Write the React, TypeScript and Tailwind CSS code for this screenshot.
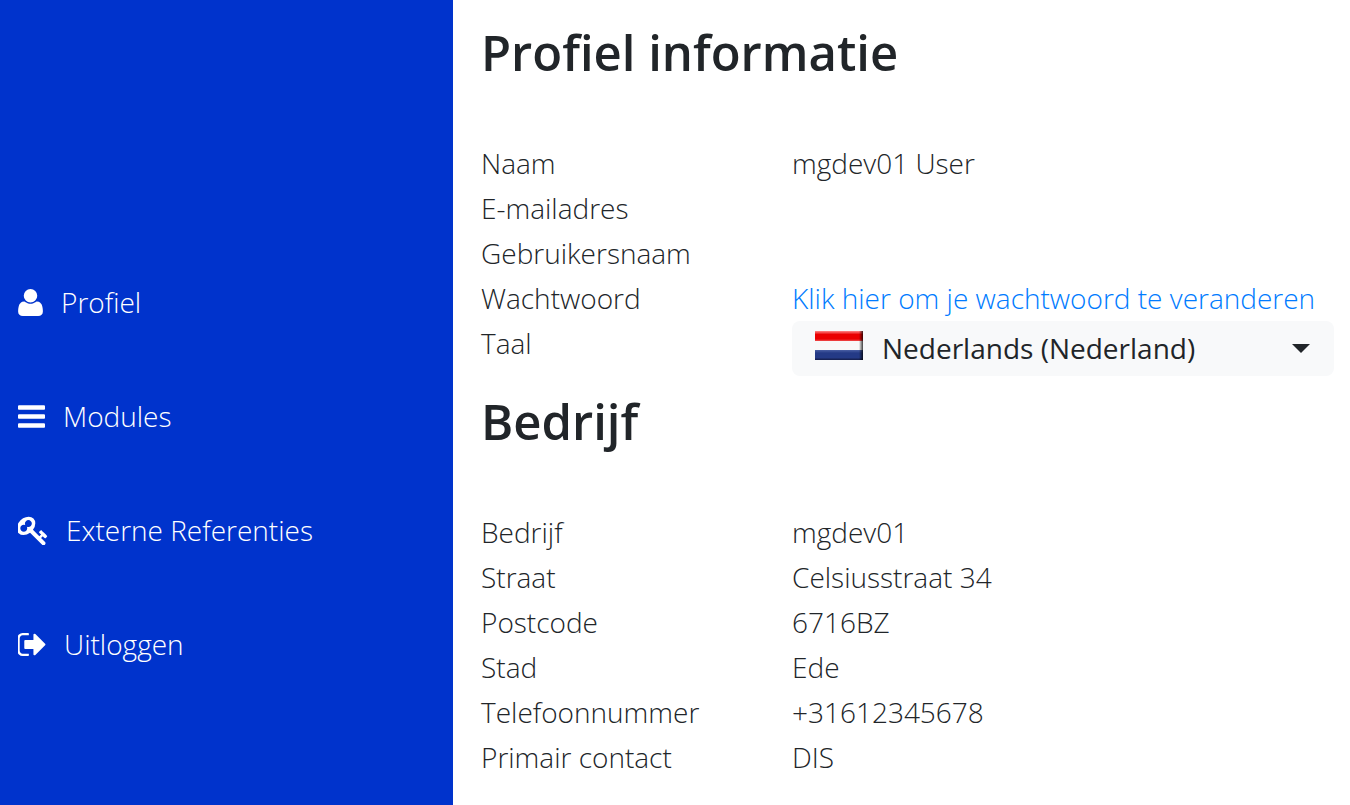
import { useState } from 'react'

const menu = [
  {
    label: 'Profiel',
    href: '#profiel',
    viewBox: '192 128 1408 1536',
    size: 'w-[25px] h-[27px]',
    path: 'M1600 1405q0 120-73 189.5t-194 69.5h-874q-121 0-194-69.5t-73-189.5q0-53 3.5-103.5t14-109 26.5-108.5 43-97.5 62-81 85.5-53.5 111.5-20q9 0 42 21.5t74.5 48 108 48 133.5 21.5 133.5-21.5 108-48 74.5-48 42-21.5q61 0 111.5 20t85.5 53.5 62 81 43 97.5 26.5 108.5 14 109 3.5 103.5zm-320-893q0 159-112.5 271.5t-271.5 112.5-271.5-112.5-112.5-271.5 112.5-271.5 271.5-112.5 271.5 112.5 112.5 271.5z',
  },
  {
    label: 'Modules',
    href: '#modules',
    viewBox: '128 256 1536 1280',
    size: 'w-[27px] h-[23px]',
    path: 'M1664 1344v128q0 26-19 45t-45 19h-1408q-26 0-45-19t-19-45v-128q0-26 19-45t45-19h1408q26 0 45 19t19 45zm0-512v128q0 26-19 45t-45 19h-1408q-26 0-45-19t-19-45v-128q0-26 19-45t45-19h1408q26 0 45 19t19 45zm0-512v128q0 26-19 45t-45 19h-1408q-26 0-45-19t-19-45v-128q0-26 19-45t45-19h1408q26 0 45 19t19 45z',
  },
  {
    label: 'Externe Referenties',
    href: '#referenties',
    viewBox: '64 96 1664 1600',
    size: 'w-[30px] h-[29px]',
    path: 'M832 512q0-80-56-136t-136-56-136 56-56 136q0 42 19 83-41-19-83-19-80 0-136 56t-56 136 56 136 136 56 136-56 56-136q0-42-19-83 41 19 83 19 80 0 136-56t56-136zm851 704q0 17-49 66t-66 49q-9 0-28.5-16t-36.5-33-38.5-40-24.5-26l-96 96 220 220q28 28 28 68 0 42-39 81t-81 39q-40 0-68-28l-671-671q-176 131-365 131-163 0-265.5-102.5t-102.5-265.5q0-160 95-313t248-248 313-95q163 0 265.5 102.5t102.5 265.5q0 189-131 365l355 355 96-96q-3-3-26-24.5t-40-38.5-33-36.5-16-28.5q0-17 49-66t66-49q13 0 23 10 6 6 46 44.5t82 79.5 86.5 86 73 78 28.5 41z',
  },
  {
    label: 'Uitloggen',
    href: '#uitloggen',
    viewBox: '96 256 1568 1280',
    size: 'w-[28px] h-[23px]',
    path: 'M704 1440q0 4 1 20t.5 26.5-3 23.5-10 19.5-20.5 6.5h-320q-119 0-203.5-84.5t-84.5-203.5v-704q0-119 84.5-203.5t203.5-84.5h320q13 0 22.5 9.5t9.5 22.5q0 4 1 20t.5 26.5-3 23.5-10 19.5-20.5 6.5h-320q-66 0-113 47t-47 113v704q0 66 47 113t113 47h312l11.5 1 11.5 3 8 5.5 7 9 2 13.5zm928-544q0 26-19 45l-544 544q-19 19-45 19t-45-19-19-45v-288h-448q-26 0-45-19t-19-45v-384q0-26 19-45t45-19h448v-288q0-26 19-45t45-19 45 19l544 544q19 19 19 45z',
  },
]

const company = [
  ['Bedrijf', 'mgdev01'],
  ['Straat', 'Celsiusstraat 34'],
  ['Postcode', '6716BZ'],
  ['Stad', 'Ede'],
  ['Telefoonnummer', '+31612345678'],
  ['Primair contact', 'DIS'],
]

function DutchFlag() {
  return (
    <svg viewBox="0 0 48 29" className="w-12 h-[29px]" aria-hidden="true">
      <defs>
        <linearGradient id="red" x1="0" y1="0" x2="0" y2="1">
          <stop offset="0" stopColor="#f88" />
          <stop offset="0.35" stopColor="#ea0000" />
          <stop offset="0.8" stopColor="#ea0000" />
          <stop offset="1" stopColor="#ee5050" />
        </linearGradient>
        <linearGradient id="blue" x1="0" y1="0" x2="0" y2="1">
          <stop offset="0" stopColor="#4a5fa4" />
          <stop offset="0.3" stopColor="#243a86" />
          <stop offset="0.75" stopColor="#243a86" />
          <stop offset="1" stopColor="#141c48" />
        </linearGradient>
        <linearGradient id="edge" x1="0" y1="0" x2="1" y2="0">
          <stop offset="0" stopColor="#000" stopOpacity="0" />
          <stop offset="1" stopColor="#000" stopOpacity="0.75" />
        </linearGradient>
      </defs>
      <rect width="48" height="10" fill="url(#red)" />
      <rect y="10" width="48" height="9" fill="#f8f8f8" />
      <rect y="19" width="48" height="10" fill="url(#blue)" />
      <rect x="44" width="4" height="29" fill="url(#edge)" />
    </svg>
  )
}

function Row({ label, children }: { label: string; children?: React.ReactNode }) {
  return (
    <div className="grid grid-cols-[311px_1fr]">
      <dt>{label}</dt>
      <dd>{children}</dd>
    </div>
  )
}

export default function App() {
  const [language, setLanguage] = useState('nl-NL')

  return (
    <div className="flex min-h-screen bg-white font-['Open_Sans','Noto_Sans',sans-serif] text-[28px] leading-[45px] font-light text-[#212529]">
      <nav className="w-[453px] shrink-0 bg-[#0033cc] px-[18px] pt-[280px] text-white">
        <ul className="flex flex-col gap-[69px]">
          {menu.map((item) => (
            <li key={item.label}>
              <a href={item.href} className="flex items-center gap-[18px]">
                <svg viewBox={item.viewBox} className={`${item.size} shrink-0 fill-current`} aria-hidden="true">
                  <path d={item.path} />
                </svg>
                {item.label}
              </a>
            </li>
          ))}
        </ul>
      </nav>

      <main className="flex-1 min-w-0 pl-7 pr-4 pt-5">
        <h1 className="mb-[57px] text-[49px] leading-[64px] font-semibold">Profiel informatie</h1>
        <dl>
          <Row label="Naam">mgdev01 User</Row>
          <Row label="E-mailadres" />
          <Row label="Gebruikersnaam" />
          <Row label="Wachtwoord">
            <a href="#wachtwoord" className="whitespace-nowrap text-[#007bff]">Klik hier om je wachtwoord te veranderen</a>
          </Row>
          <div className="grid grid-cols-[311px_1fr]">
            <dt>
              <label htmlFor="taal">Taal</label>
            </dt>
            <dd className="relative">
              <select
                id="taal"
                value={language}
                onChange={(e) => setLanguage(e.target.value)}
                className="block h-[55px] w-full appearance-none rounded-lg bg-[#f8f9fa] pl-[90px] pr-12 font-normal"
              >
                <option value="nl-NL">Nederlands (Nederland)</option>
                <option value="en-GB">English (United Kingdom)</option>
              </select>
              <span className="pointer-events-none absolute left-[23px] top-[10px]">
                <DutchFlag />
              </span>
              <svg viewBox="0 0 18 9" className="pointer-events-none absolute right-6 top-[23px] h-[9px] w-[18px] fill-current" aria-hidden="true">
                <path d="M0 0h18L9 9z" />
              </svg>
            </dd>
          </div>
        </dl>

        <h2 className="mt-[13px] mb-[57px] text-[49px] leading-[64px] font-semibold">Bedrijf</h2>
        <dl>
          {company.map(([label, value]) => (
            <Row key={label} label={label}>{value}</Row>
          ))}
        </dl>
      </main>
    </div>
  )
}
